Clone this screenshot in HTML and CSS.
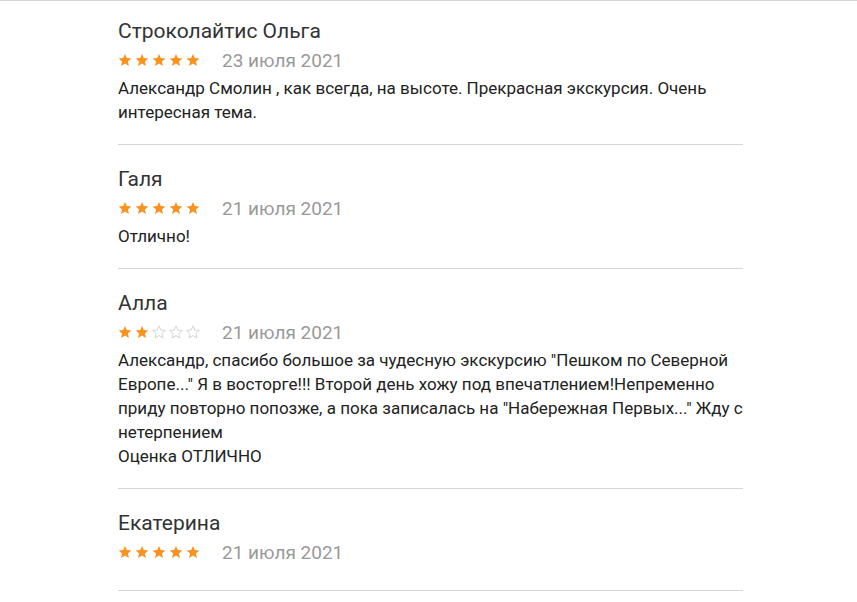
FILE: index.html
```html
<!DOCTYPE html>
<html lang="ru">
<head>
    <meta charset="UTF-8">
    <title>Отзывы</title>
    <link rel="stylesheet" href="styles.css">
</head>
<body>
    <div class="topline"></div>

    <!-- Reviews -->
    <ul class="reviews">
        <li class="review">
            <div class="name">Строколайтис Ольга</div>
            <div class="meta">
                <span class="stars">
                    <svg class="star on" viewBox="0 0 24 24"><path d="M12 1.5l3.1 7.2 7.8.7-5.9 5.2 1.8 7.7L12 18.2l-6.8 4.1L7 14.6 1.1 9.4l7.8-.7z"/></svg>
                    <svg class="star on" viewBox="0 0 24 24"><path d="M12 1.5l3.1 7.2 7.8.7-5.9 5.2 1.8 7.7L12 18.2l-6.8 4.1L7 14.6 1.1 9.4l7.8-.7z"/></svg>
                    <svg class="star on" viewBox="0 0 24 24"><path d="M12 1.5l3.1 7.2 7.8.7-5.9 5.2 1.8 7.7L12 18.2l-6.8 4.1L7 14.6 1.1 9.4l7.8-.7z"/></svg>
                    <svg class="star on" viewBox="0 0 24 24"><path d="M12 1.5l3.1 7.2 7.8.7-5.9 5.2 1.8 7.7L12 18.2l-6.8 4.1L7 14.6 1.1 9.4l7.8-.7z"/></svg>
                    <svg class="star on" viewBox="0 0 24 24"><path d="M12 1.5l3.1 7.2 7.8.7-5.9 5.2 1.8 7.7L12 18.2l-6.8 4.1L7 14.6 1.1 9.4l7.8-.7z"/></svg>
                </span>
                <span class="date">23 июля 2021</span>
            </div>
            <p class="text">Александр Смолин , как всегда, на высоте. Прекрасная экскурсия. Очень интересная тема.</p>
        </li>
        <li class="review">
            <div class="name">Галя</div>
            <div class="meta">
                <span class="stars">
                    <svg class="star on" viewBox="0 0 24 24"><path d="M12 1.5l3.1 7.2 7.8.7-5.9 5.2 1.8 7.7L12 18.2l-6.8 4.1L7 14.6 1.1 9.4l7.8-.7z"/></svg>
                    <svg class="star on" viewBox="0 0 24 24"><path d="M12 1.5l3.1 7.2 7.8.7-5.9 5.2 1.8 7.7L12 18.2l-6.8 4.1L7 14.6 1.1 9.4l7.8-.7z"/></svg>
                    <svg class="star on" viewBox="0 0 24 24"><path d="M12 1.5l3.1 7.2 7.8.7-5.9 5.2 1.8 7.7L12 18.2l-6.8 4.1L7 14.6 1.1 9.4l7.8-.7z"/></svg>
                    <svg class="star on" viewBox="0 0 24 24"><path d="M12 1.5l3.1 7.2 7.8.7-5.9 5.2 1.8 7.7L12 18.2l-6.8 4.1L7 14.6 1.1 9.4l7.8-.7z"/></svg>
                    <svg class="star on" viewBox="0 0 24 24"><path d="M12 1.5l3.1 7.2 7.8.7-5.9 5.2 1.8 7.7L12 18.2l-6.8 4.1L7 14.6 1.1 9.4l7.8-.7z"/></svg>
                </span>
                <span class="date">21 июля 2021</span>
            </div>
            <p class="text">Отлично!</p>
        </li>
        <li class="review">
            <div class="name">Алла</div>
            <div class="meta">
                <span class="stars">
                    <svg class="star on" viewBox="0 0 24 24"><path d="M12 1.5l3.1 7.2 7.8.7-5.9 5.2 1.8 7.7L12 18.2l-6.8 4.1L7 14.6 1.1 9.4l7.8-.7z"/></svg>
                    <svg class="star on" viewBox="0 0 24 24"><path d="M12 1.5l3.1 7.2 7.8.7-5.9 5.2 1.8 7.7L12 18.2l-6.8 4.1L7 14.6 1.1 9.4l7.8-.7z"/></svg>
                    <svg class="star off" viewBox="0 0 24 24"><path d="M12 1.5l3.1 7.2 7.8.7-5.9 5.2 1.8 7.7L12 18.2l-6.8 4.1L7 14.6 1.1 9.4l7.8-.7z"/></svg>
                    <svg class="star off" viewBox="0 0 24 24"><path d="M12 1.5l3.1 7.2 7.8.7-5.9 5.2 1.8 7.7L12 18.2l-6.8 4.1L7 14.6 1.1 9.4l7.8-.7z"/></svg>
                    <svg class="star off" viewBox="0 0 24 24"><path d="M12 1.5l3.1 7.2 7.8.7-5.9 5.2 1.8 7.7L12 18.2l-6.8 4.1L7 14.6 1.1 9.4l7.8-.7z"/></svg>
                </span>
                <span class="date">21 июля 2021</span>
            </div>
            <p class="text">Александр, спасибо большое за чудесную экскурсию "Пешком по Северной Европе..." Я в восторге!!! Второй день хожу под впечатлением!Непременно приду повторно попозже, а пока записалась на "Набережная Первых..." Жду с нетерпением<br>Оценка ОТЛИЧНО</p>
        </li>
        <li class="review">
            <div class="name">Екатерина</div>
            <div class="meta">
                <span class="stars">
                    <svg class="star on" viewBox="0 0 24 24"><path d="M12 1.5l3.1 7.2 7.8.7-5.9 5.2 1.8 7.7L12 18.2l-6.8 4.1L7 14.6 1.1 9.4l7.8-.7z"/></svg>
                    <svg class="star on" viewBox="0 0 24 24"><path d="M12 1.5l3.1 7.2 7.8.7-5.9 5.2 1.8 7.7L12 18.2l-6.8 4.1L7 14.6 1.1 9.4l7.8-.7z"/></svg>
                    <svg class="star on" viewBox="0 0 24 24"><path d="M12 1.5l3.1 7.2 7.8.7-5.9 5.2 1.8 7.7L12 18.2l-6.8 4.1L7 14.6 1.1 9.4l7.8-.7z"/></svg>
                    <svg class="star on" viewBox="0 0 24 24"><path d="M12 1.5l3.1 7.2 7.8.7-5.9 5.2 1.8 7.7L12 18.2l-6.8 4.1L7 14.6 1.1 9.4l7.8-.7z"/></svg>
                    <svg class="star on" viewBox="0 0 24 24"><path d="M12 1.5l3.1 7.2 7.8.7-5.9 5.2 1.8 7.7L12 18.2l-6.8 4.1L7 14.6 1.1 9.4l7.8-.7z"/></svg>
                </span>
                <span class="date">21 июля 2021</span>
            </div>
        </li>
    </ul>
</body>
</html>
```

FILE: styles.css
```css
/* General Styles */
body {
    font-family: Roboto, "Noto Sans", Arial, sans-serif;
    margin: 0;
    padding: 0;
    background-color: #fff;
    color: #333;
}

.topline {
    border-top: 1px solid #d4d4d4;
}

/* Reviews */
.reviews {
    list-style: none;
    margin: 0;
    padding: 0 0 0 118px;
    width: 625px;
}

.review {
    padding: 21px 0 20px;
    border-bottom: 1px solid #d6d6d6;
}

.review:first-child {
    padding-top: 17px;
}

.review:last-child {
    padding-bottom: 22px;
}

.name {
    font-size: 21px;
    line-height: 26px;
    color: #333;
}

.meta {
    display: flex;
    align-items: center;
    height: 32px;
    gap: 22px;
}

.stars {
    display: flex;
    gap: 3px;
}

.star {
    width: 14px;
    height: 14px;
}

.star.on path {
    fill: #f7931e;
}

.star.off path {
    fill: none;
    stroke: #c8c8c8;
    stroke-width: 1.3;
}

.date {
    font-size: 19px;
    color: #999;
}

.text {
    margin: 0;
    font-size: 17px;
    line-height: 24px;
    color: #222;
}
```
